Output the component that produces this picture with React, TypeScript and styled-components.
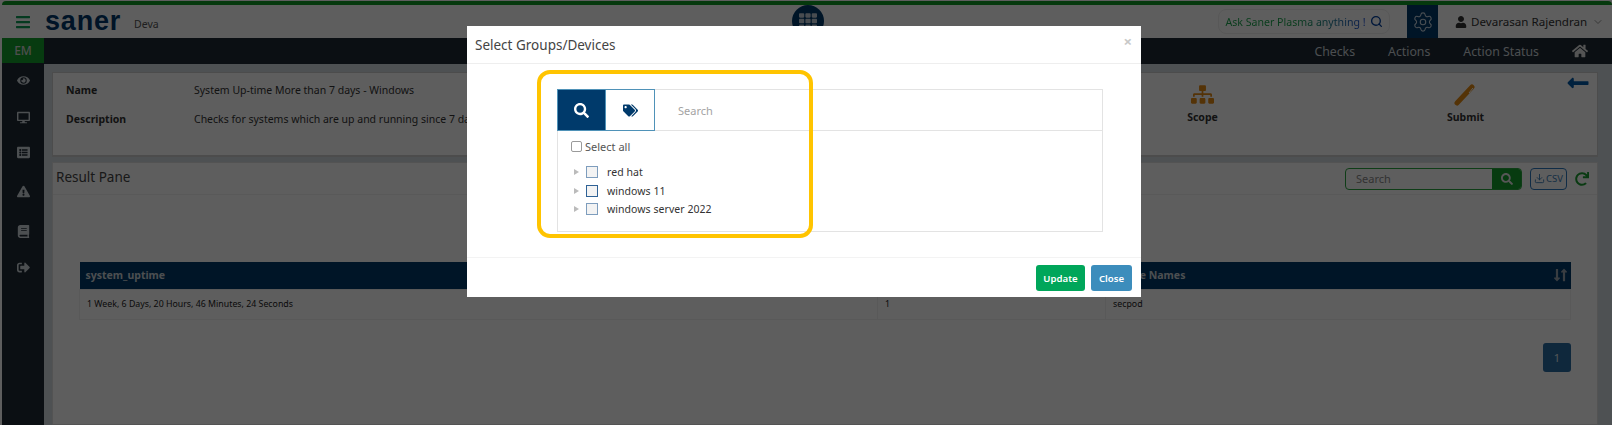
import * as React from 'react';
import styled, { createGlobalStyle } from 'styled-components';
import {
	FaBars,
	FaBook,
	FaDesktop,
	FaExclamationTriangle,
	FaEye,
	FaHome,
	FaListAlt,
	FaLongArrowAltDown,
	FaLongArrowAltLeft,
	FaLongArrowAltUp,
	FaRedo,
	FaSearch,
	FaSignOutAlt,
	FaSitemap,
	FaTags,
	FaTh,
	FaUser
} from 'react-icons/fa';
import { ChevronDown, Download, Search as SearchLine, Settings } from 'lucide-react';

const FONT = `'Noto Sans', 'Open Sans', sans-serif`;

const GlobalStyle = createGlobalStyle`
	html, body { margin: 0; padding: 0; background: #fff; overflow: hidden; }
	* { box-sizing: border-box; }
	body { font-family: ${FONT}; }
`;

const Page = styled.div`
	position: relative;
	width: 1612px;
	height: 425px;
	overflow: hidden;
	padding-left: 2px;
	padding-top: 1px;
	background: #fff;
`;

const TopStrip = styled.div`
	height: 4px;
	background: #109a25;
	border-radius: 4px 4px 0 0;
`;

const Header = styled.header`
	position: relative;
	height: 33px;
	display: flex;
	align-items: center;
	background: #fff;
`;

const Burger = styled.span`
	display: flex;
	margin-left: 13px;
	font-size: 16px;
	color: #0f9d58;
`;

const Logo = styled.span`
	margin-left: 14px;
	font-family: 'Liberation Sans', sans-serif;
	font-weight: 700;
	font-size: 27px;
	letter-spacing: 0.8px;
	color: #00386b;
	line-height: 33px;
`;

const Org = styled.span`
	margin-left: 13px;
	margin-top: 4px;
	font-size: 10.5px;
	color: #555;
`;

const AppsButton = styled.span`
	position: absolute;
	left: 790px;
	top: 0;
	width: 32px;
	height: 32px;
	border-radius: 50%;
	background: #003a6b;
	color: #c3ced8;
	display: flex;
	align-items: center;
	justify-content: center;
	font-size: 18px;
`;

const HeaderRight = styled.div`
	margin-left: auto;
	display: flex;
	align-items: center;
	height: 100%;
`;

const AskPill = styled.div`
	width: 172px;
	height: 25px;
	display: flex;
	align-items: center;
	justify-content: center;
	gap: 4px;
	border: 1px solid #eee;
	border-radius: 8px;
	font-size: 10.6px;
	margin-right: 17px;
	color: #003f9e;
`;

const AskText = styled.span`
	background: linear-gradient(90deg, #16a34a 0%, #16a34a 50%, #1d4ed8 100%);
	-webkit-background-clip: text;
	background-clip: text;
	color: transparent;
`;

const GearBox = styled.span`
	width: 31px;
	height: 33px;
	background: #003a6b;
	color: #c6d3df;
	display: flex;
	align-items: center;
	justify-content: center;
`;

const UserMenu = styled.div`
	width: 174px;
	padding-left: 17px;
	display: flex;
	align-items: center;
	font-size: 11.6px;
	color: #333;
	white-space: nowrap;
`;

const UserName = styled.span`
	margin-left: 4px;
	margin-right: 5px;
`;

const Main = styled.div`
	display: grid;
	grid-template-columns: 42px 1fr;
	height: 387px;
`;

const Sidebar = styled.nav`
	background: #1e2a35;
	display: flex;
	flex-direction: column;
	align-items: center;
`;

const EmTab = styled.div`
	align-self: stretch;
	height: 25px;
	background: #14a02c;
	color: #d4d4d4;
	font-size: 12px;
	font-weight: 500;
	display: flex;
	align-items: center;
	justify-content: center;
`;

const SideIcon = styled.span<{ $top: number }>`
	display: flex;
	margin-top: ${p => p.$top}px;
	font-size: 13px;
	color: #cfd6dc;
`;

const Content = styled.div`
	background: #d4dbe2;
	display: flex;
	flex-direction: column;
	min-width: 0;
`;

const NavBar = styled.div`
	height: 26px;
	background: #1e2a35;
	display: flex;
	align-items: center;
	justify-content: flex-end;
	padding-right: 24px;
	font-size: 12.3px;
	color: #cdd3d9;
`;

const NavLink = styled.span<{ $gap: number }>`
	margin-right: ${p => p.$gap}px;
`;

const HomeIcon = styled.span`
	display: flex;
	font-size: 16px;
	color: #e5e5e5;
`;

const DetailCard = styled.section`
	margin: 8px 14px 0 8px;
	height: 85px;
	background: #fff;
	border: 1px solid #cfcfcf;
	border-bottom-width: 2px;
	display: grid;
	grid-template-columns: 128px 1fr 263px 263px;
	padding: 10px 0 0 13px;
	font-size: 10.5px;
	color: #333;
	position: relative;
`;

const DetailLabels = styled.div`
	display: flex;
	flex-direction: column;
	gap: 14px;
	font-weight: 700;
	line-height: 15px;
`;

const DetailValues = styled.div`
	display: flex;
	flex-direction: column;
	gap: 14px;
	line-height: 15px;
`;

const ActionTile = styled.div`
	display: flex;
	flex-direction: column;
	align-items: center;
	font-weight: 700;
	font-size: 10.5px;
	gap: 4px;
`;

const TileIcon = styled.span`
	display: flex;
	font-size: 23px;
	color: #e58a13;
`;

const BackArrow = styled.span`
	position: absolute;
	top: -2px;
	right: 7px;
	display: flex;
	font-size: 24px;
	color: #0059a8;
`;

const ResultPanel = styled.section`
	margin: 5px 14px 0 8px;
	flex: 1;
	background: #fff;
	border: 1px solid #e1e1e1;
`;

const PanelHead = styled.div`
	height: 32px;
	display: flex;
	align-items: center;
	padding: 0 8px 0 3px;
	border-bottom: 1px solid #f0f0f0;
`;

const PanelTitle = styled.h3`
	margin: -4px auto 0 0;
	font-size: 13.5px;
	font-weight: 400;
	color: #444;
`;

const SearchGroup = styled.div`
	width: 177px;
	height: 22px;
	display: flex;
	border: 1px solid #2aa63e;
	border-radius: 4px;
	overflow: hidden;
`;

const SearchField = styled.span`
	flex: 1;
	padding-left: 10px;
	font-size: 11px;
	line-height: 20px;
	color: #8a8a8a;
`;

const SearchAddon = styled.span`
	width: 29px;
	background: #14a02c;
	color: #e8e8e8;
	display: flex;
	align-items: center;
	justify-content: center;
	font-size: 12px;
`;

const CsvButton = styled.span`
	margin-left: 8px;
	width: 37px;
	height: 22px;
	border: 1px solid #2c78bd;
	border-radius: 4px;
	color: #3b7eb8;
	font-size: 9.5px;
	display: flex;
	align-items: center;
	justify-content: center;
	gap: 1px;
`;

const Refresh = styled.span`
	margin-left: 8px;
	display: flex;
	font-size: 14px;
	color: #1b9e31;
`;

const TableWrap = styled.div`
	margin: 67px 26px 0 26px;
`;

const Table = styled.table`
	width: 100%;
	border-collapse: collapse;
	table-layout: fixed;
	font-size: 8.8px;
	color: #222;
`;

const HeadCell = styled.th<{ $w?: number }>`
	width: ${p => (p.$w ? `${p.$w}px` : 'auto')};
	height: 27px;
	background: #003a6b;
	color: #cfd6dc;
	font-size: 10.5px;
	font-weight: 700;
	text-align: left;
	padding: 0 6px;
	position: relative;
`;

const SortMark = styled.span`
	position: absolute;
	right: 0;
	top: 6px;
	display: flex;
	font-size: 14px;
	color: #9aa6b1;

	svg + svg {
		margin-left: -7px;
	}
`;

const BodyCell = styled.td`
	height: 30px;
	padding: 0 7px;
	border: 1px solid #f0f0f0;
`;

const PageRow = styled.div`
	display: flex;
	justify-content: flex-end;
	margin-top: 23px;
`;

const PageNum = styled.span`
	width: 28px;
	height: 29px;
	border-radius: 3px;
	background: #2a6ca3;
	color: #e2e8ee;
	font-size: 11px;
	display: flex;
	align-items: center;
	justify-content: center;
`;

const Backdrop = styled.div`
	position: absolute;
	inset: 0;
	background: rgba(0, 0, 0, 0.63);
	display: flex;
	justify-content: center;
	align-items: flex-start;
	padding: 26px 4px 0 0;
`;

const Modal = styled.div`
	position: relative;
	width: 674px;
	height: 271px;
	background: #fff;
	display: flex;
	flex-direction: column;
`;

const ModalHead = styled.div`
	height: 38px;
	display: flex;
	align-items: center;
	justify-content: space-between;
	padding: 0 9px 0 8px;
	border-bottom: 1px solid #eee;
`;

const ModalTitle = styled.h4`
	margin: 0;
	font-size: 13.5px;
	font-weight: 400;
	color: #444;
`;

const Dismiss = styled.span`
	margin-top: -8px;
	font-size: 15px;
	font-weight: 700;
	color: #c8c8c8;
`;

const ModalBody = styled.div`
	flex: 1;
	padding: 25px 38px 0 90px;
`;

const Picker = styled.div`
	height: 143px;
	border: 1px solid #e3e3e3;
	display: flex;
	flex-direction: column;
`;

const PickerTop = styled.div`
	height: 41px;
	display: flex;
	border-bottom: 1px solid #e3e3e3;
`;

const TabButton = styled.span<{ $active?: boolean }>`
	width: 49px;
	margin: -1px 0 -1px ${p => (p.$active ? '-1px' : '0')};
	display: flex;
	align-items: center;
	justify-content: center;
	font-size: 15px;
	background: ${p => (p.$active ? '#003a6b' : '#fff')};
	color: ${p => (p.$active ? '#fff' : '#003a6b')};
	border: 1px solid #4f92b8;
	border-left-width: ${p => (p.$active ? '1px' : '0')};
`;

const PickerSearch = styled.span`
	margin-left: 23px;
	align-self: center;
	font-size: 11px;
	color: #a3a3a3;
`;

const PickerBody = styled.div`
	padding: 7px 13px;
`;

const SelectAll = styled.label`
	display: flex;
	align-items: center;
	gap: 3px;
	font-size: 11px;
	color: #555;
	height: 16px;
`;

const PlainBox = styled.span`
	width: 11px;
	height: 11px;
	border: 1px solid #9a9a9a;
	border-radius: 2px;
`;

const TreeList = styled.ul`
	list-style: none;
	margin: 9px 0 0;
	padding: 0;
`;

const TreeItem = styled.li`
	height: 18.5px;
	display: flex;
	align-items: center;
	font-size: 10.5px;
	letter-spacing: 0.05px;
	color: #333;
`;

const Caret = styled.span`
	width: 0;
	height: 0;
	margin: 0 7px 0 3px;
	border-left: 5px solid #bbb;
	border-top: 3.5px solid transparent;
	border-bottom: 3.5px solid transparent;
`;

const TreeBox = styled.span<{ $dark?: boolean }>`
	width: 12px;
	height: 12px;
	margin-right: 9px;
	background: #f3f3f3;
	border: 1px solid ${p => (p.$dark ? '#2f6296' : '#7e9dbd')};
`;

const Highlight = styled.div`
	position: absolute;
	left: 70px;
	top: 44px;
	width: 276px;
	height: 168px;
	border: 4px solid #ffc400;
	border-radius: 13px;
	pointer-events: none;
`;

const ModalFoot = styled.div`
	height: 40px;
	border-top: 1px solid #f3f3f3;
	display: flex;
	justify-content: flex-end;
	align-items: flex-start;
	gap: 6px;
	padding: 7px 9px 0 0;
`;

const FootButton = styled.span<{ $bg: string; $w: number }>`
	width: ${p => p.$w}px;
	height: 26px;
	border-radius: 3px;
	background: ${p => p.$bg};
	color: #fff;
	font-size: 9.6px;
	font-weight: 600;
	display: flex;
	align-items: center;
	justify-content: center;
`;

const sideIcons = [
	{ icon: <FaEye />, top: 11 },
	{ icon: <FaDesktop />, top: 24 },
	{ icon: <FaListAlt />, top: 22 },
	{ icon: <FaExclamationTriangle />, top: 26 },
	{ icon: <FaBook />, top: 27 },
	{ icon: <FaSignOutAlt />, top: 23 }
];

const groups = [ 'red hat', 'windows 11', 'windows server 2022' ];

const App: React.FunctionComponent = () => {
	return (
		<Page>
			<GlobalStyle />
			<TopStrip />
			<Header>
				<Burger>
					<FaBars />
				</Burger>
				<Logo>saner</Logo>
				<Org>Deva</Org>
				<AppsButton>
					<FaTh />
				</AppsButton>
				<HeaderRight>
					<AskPill>
						<AskText>Ask Saner Plasma anything !</AskText>
						<SearchLine size={13} strokeWidth={2.5} />
					</AskPill>
					<GearBox>
						<Settings size={22} strokeWidth={1.2} />
					</GearBox>
					<UserMenu>
						<FaUser size={12} />
						<UserName>Devarasan Rajendran</UserName>
						<ChevronDown size={12} color="#999" />
					</UserMenu>
				</HeaderRight>
			</Header>
			<Main>
				<Sidebar>
					<EmTab>EM</EmTab>
					{sideIcons.map((s, i) => <SideIcon key={i} $top={s.top}>{s.icon}</SideIcon>)}
				</Sidebar>
				<Content>
					<NavBar>
						<NavLink $gap={33}>Checks</NavLink>
						<NavLink $gap={33}>Actions</NavLink>
						<NavLink $gap={33}>Action Status</NavLink>
						<HomeIcon>
							<FaHome />
						</HomeIcon>
					</NavBar>
					<DetailCard>
						<DetailLabels>
							<span>Name</span>
							<span>Description</span>
						</DetailLabels>
						<DetailValues>
							<span>System Up-time More than 7 days - Windows</span>
							<span>Checks for systems which are up and running since 7 days</span>
						</DetailValues>
						<ActionTile>
							<TileIcon>
								<FaSitemap />
							</TileIcon>
							Scope
						</ActionTile>
						<ActionTile>
							<TileIcon>
								<svg width="23" height="23" viewBox="0 0 23 23">
									<path d="M3 20L18 4" stroke="currentColor" strokeWidth="5" strokeLinecap="round" />
									<path d="M15 10L19 5" stroke="#fff" strokeWidth="1" />
								</svg>
							</TileIcon>
							Submit
						</ActionTile>
						<BackArrow>
							<FaLongArrowAltLeft />
						</BackArrow>
					</DetailCard>
					<ResultPanel>
						<PanelHead>
							<PanelTitle>Result Pane</PanelTitle>
							<SearchGroup>
								<SearchField>Search</SearchField>
								<SearchAddon>
									<FaSearch />
								</SearchAddon>
							</SearchGroup>
							<CsvButton>
								<Download size={11} />CSV
							</CsvButton>
							<Refresh>
								<FaRedo />
							</Refresh>
						</PanelHead>
						<TableWrap>
							<Table>
								<thead>
									<tr>
										<HeadCell $w={798}>system_uptime</HeadCell>
										<HeadCell $w={228} />
										<HeadCell>
											Device Names
											<SortMark>
												<FaLongArrowAltDown />
												<FaLongArrowAltUp />
											</SortMark>
										</HeadCell>
									</tr>
								</thead>
								<tbody>
									<tr>
										<BodyCell>1 Week, 6 Days, 20 Hours, 46 Minutes, 24 Seconds</BodyCell>
										<BodyCell>1</BodyCell>
										<BodyCell>secpod</BodyCell>
									</tr>
								</tbody>
							</Table>
							<PageRow>
								<PageNum>1</PageNum>
							</PageRow>
						</TableWrap>
					</ResultPanel>
				</Content>
			</Main>
			<Backdrop>
				<Modal>
					<ModalHead>
						<ModalTitle>Select Groups/Devices</ModalTitle>
						<Dismiss>×</Dismiss>
					</ModalHead>
					<ModalBody>
						<Picker>
							<PickerTop>
								<TabButton $active>
									<FaSearch />
								</TabButton>
								<TabButton>
									<FaTags />
								</TabButton>
								<PickerSearch>Search</PickerSearch>
							</PickerTop>
							<PickerBody>
								<SelectAll>
									<PlainBox />
									Select all
								</SelectAll>
								<TreeList>
									{groups.map((g, i) => (
										<TreeItem key={g}>
											<Caret />
											<TreeBox $dark={i === 1} />
											{g}
										</TreeItem>
									))}
								</TreeList>
							</PickerBody>
						</Picker>
					</ModalBody>
					<ModalFoot>
						<FootButton $bg="#00a65a" $w={49}>Update</FootButton>
						<FootButton $bg="#3c8dbc" $w={41}>Close</FootButton>
					</ModalFoot>
					<Highlight />
				</Modal>
			</Backdrop>
		</Page>
	);
};

export default App;
